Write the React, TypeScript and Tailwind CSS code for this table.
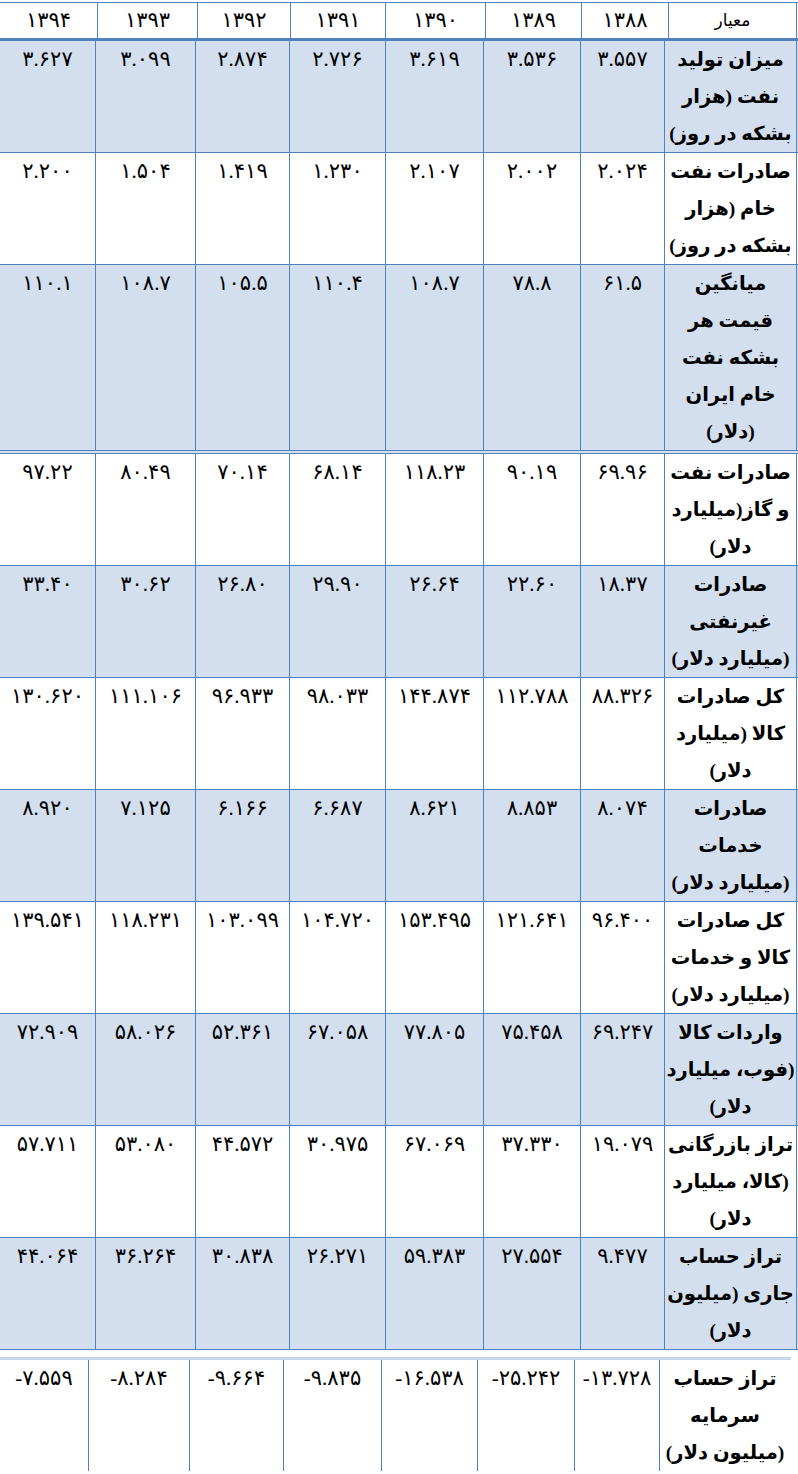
const YEARS = ["۱۳۹۴", "۱۳۹۳", "۱۳۹۲", "۱۳۹۱", "۱۳۹۰", "۱۳۸۹", "۱۳۸۸"];
const HEAD_COLS = ["w-[98px]", "w-[100px]", "w-[93px]", "w-[95px]", "w-[100px]", "w-[96px]", "w-[87px]"];

// column widths, left to right (1394 → 1388)
const MAIN_COLS = ["w-[96px]", "w-[100px]", "w-[94px]", "w-[96px]", "w-[98px]", "w-[97px]", "w-[84px]"];
const TAIL_COLS = ["w-[89px]", "w-[101px]", "w-[94px]", "w-[98px]", "w-[96px]", "w-[97px]", "w-[85px]"];

type Row = { label: string[]; values: string[] };

// values are listed 1388 → 1394, same as the source table reads right to left
const ROWS: Row[] = [
  {
    label: ["میزان تولید", "نفت (هزار", "بشکه در روز)"],
    values: ["۳.۵۵۷", "۳.۵۳۶", "۳.۶۱۹", "۲.۷۲۶", "۲.۸۷۴", "۳.۰۹۹", "۳.۶۲۷"],
  },
  {
    label: ["صادرات نفت", "خام (هزار", "بشکه در روز)"],
    values: ["۲.۰۲۴", "۲.۰۰۲", "۲.۱۰۷", "۱.۲۳۰", "۱.۴۱۹", "۱.۵۰۴", "۲.۲۰۰"],
  },
  {
    label: ["میانگین", "قیمت هر", "بشکه نفت", "خام ایران", "(دلار)"],
    values: ["۶۱.۵", "۷۸.۸", "۱۰۸.۷", "۱۱۰.۴", "۱۰۵.۵", "۱۰۸.۷", "۱۱۰.۱"],
  },
  {
    label: ["صادرات نفت", "و گاز(میلیارد", "دلار)"],
    values: ["۶۹.۹۶", "۹۰.۱۹", "۱۱۸.۲۳", "۶۸.۱۴", "۷۰.۱۴", "۸۰.۴۹", "۹۷.۲۲"],
  },
  {
    label: ["صادرات", "غیرنفتی", "(میلیارد دلار)"],
    values: ["۱۸.۳۷", "۲۲.۶۰", "۲۶.۶۴", "۲۹.۹۰", "۲۶.۸۰", "۳۰.۶۲", "۳۳.۴۰"],
  },
  {
    label: ["کل صادرات", "کالا (میلیارد", "دلار)"],
    values: ["۸۸.۳۲۶", "۱۱۲.۷۸۸", "۱۴۴.۸۷۴", "۹۸.۰۳۳", "۹۶.۹۳۳", "۱۱۱.۱۰۶", "۱۳۰.۶۲۰"],
  },
  {
    label: ["صادرات", "خدمات", "(میلیارد دلار)"],
    values: ["۸.۰۷۴", "۸.۸۵۳", "۸.۶۲۱", "۶.۶۸۷", "۶.۱۶۶", "۷.۱۲۵", "۸.۹۲۰"],
  },
  {
    label: ["کل صادرات", "کالا و خدمات", "(میلیارد دلار)"],
    values: ["۹۶.۴۰۰", "۱۲۱.۶۴۱", "۱۵۳.۴۹۵", "۱۰۴.۷۲۰", "۱۰۳.۰۹۹", "۱۱۸.۲۳۱", "۱۳۹.۵۴۱"],
  },
  {
    label: ["واردات کالا", "(فوب، میلیارد", "دلار)"],
    values: ["۶۹.۲۴۷", "۷۵.۴۵۸", "۷۷.۸۰۵", "۶۷.۰۵۸", "۵۲.۳۶۱", "۵۸.۰۲۶", "۷۲.۹۰۹"],
  },
  {
    label: ["تراز بازرگانی", "(کالا، میلیارد", "دلار)"],
    values: ["۱۹.۰۷۹", "۳۷.۳۳۰", "۶۷.۰۶۹", "۳۰.۹۷۵", "۴۴.۵۷۲", "۵۳.۰۸۰", "۵۷.۷۱۱"],
  },
  {
    label: ["تراز حساب", "جاری (میلیون", "دلار)"],
    values: ["۹.۴۷۷", "۲۷.۵۵۴", "۵۹.۳۸۳", "۲۶.۲۷۱", "۳۰.۸۳۸", "۳۶.۲۶۴", "۴۴.۰۶۴"],
  },
];

const CAPITAL: Row = {
  label: ["تراز حساب", "سرمایه", "(میلیون دلار)"],
  values: ["-۱۳.۷۲۸", "-۲۵.۲۴۲", "-۱۶.۵۳۸", "-۹.۸۳۵", "-۹.۶۶۴", "-۸.۲۸۴", "-۷.۵۵۹"],
};

function DataRow({ row, cols, shaded, bottom, labelClass }: {
  row: Row;
  cols: string[];
  shaded: boolean;
  bottom: string;
  labelClass: string;
}) {
  const vals = [...row.values].reverse();
  return (
    <div className={`flex ${shaded ? "bg-[#d3dfee]" : "bg-white"} ${bottom}`}>
      {vals.map((v, i) => (
        <div
          key={i}
          dir="ltr"
          className={`${cols[i]} shrink-0 border-r border-[#4f81bd] text-center text-[21px] leading-[36px] text-black`}
        >
          {v}
        </div>
      ))}
      <div className={`${labelClass} shrink-0 text-center text-[19.5px] leading-[37px] font-bold text-black`} dir="rtl">
        {row.label.map((l, i) => (
          <div key={i} className="whitespace-nowrap">{l}</div>
        ))}
      </div>
    </div>
  );
}

export default function App() {
  return (
    <div className="w-[798px] min-h-[1474px] bg-white pt-[2px] font-['Liberation_Serif','DejaVu_Sans',serif]">
      <div className="border-t border-[#4f81bd]">
        <div className="flex border-b-[3px] border-[#4f81bd] bg-white">
          {YEARS.map((y, i) => (
            <div
              key={y}
              className={`${HEAD_COLS[i]} shrink-0 border-r border-[#4f81bd] text-center text-[21px] leading-[35px] text-black`}
            >
              {y}
            </div>
          ))}
          <div className="w-[128px] shrink-0 border-r border-[#4f81bd] text-center text-[17px] leading-[35px] text-black" dir="rtl">
            معیار
          </div>
        </div>

        {ROWS.map((r, i) => (
          <DataRow
            key={i}
            row={r}
            cols={MAIN_COLS}
            shaded={i % 2 === 0}
            labelClass="w-[132px] border-r border-[#4f81bd]"
            bottom={i === 2 ? "border-b-4 border-double border-[#4f81bd]" : "border-b border-[#4f81bd]"}
          />
        ))}
      </div>

      <div className="mt-[7px] w-[791px] border-t-[3px] border-[#c9d7ec]">
        <DataRow row={CAPITAL} cols={TAIL_COLS} shaded={false} labelClass="w-[130px]" bottom="" />
      </div>
    </div>
  );
}
